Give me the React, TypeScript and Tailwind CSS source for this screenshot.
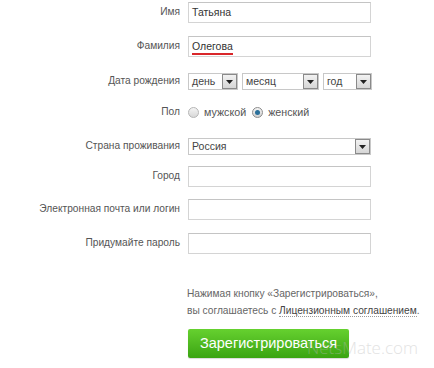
import React from "react";

const font = { fontFamily: '"Liberation Sans", Arial, sans-serif' };

function Arrow() {
  return (
    <div className="flex h-full w-[15px] items-center justify-center border border-[#8a8a8a] bg-gradient-to-b from-[#f2f2f2] to-[#d6d6d6]">
      <svg width="7" height="4" viewBox="0 0 7 4">
        <path d="M0 0 L7 0 L3.5 4 Z" fill="#222" />
      </svg>
    </div>
  );
}

function Select({ text, w }: { text: string; w: string }) {
  return (
    <div className={`flex h-[17px] items-center border border-[#c8c8c8] bg-white ${w}`}>
      <span className="flex-1 pl-[3px] text-[10.5px] leading-none text-[#444]">{text}</span>
      <Arrow />
    </div>
  );
}

function Row({ label, children, cls }: { label: string; children: React.ReactNode; cls: string }) {
  return (
    <div className={`grid grid-cols-[180px_183px] items-center gap-x-[8px] ${cls}`}>
      <div className="whitespace-nowrap text-right text-[10.2px] leading-none text-[#555]">{label}</div>
      <div className="flex items-center">{children}</div>
    </div>
  );
}

function Input({ value, underline }: { value?: string; underline?: boolean }) {
  return (
    <div className="relative flex h-[21px] w-[183px] items-center border border-[#d4d4d4] border-t-[#c4c4c4] bg-white pl-[3px] text-[10.5px] text-[#333]">
      {value && (
        <span className="relative leading-none">
          {value}
          {underline && <span className="absolute left-0 right-0 top-[12px] h-[2px] bg-[#d9262a]" />}
        </span>
      )}
    </div>
  );
}

export default function App() {
  return (
    <div className="relative h-[368px] w-[434px] overflow-hidden bg-white" style={font}>
      <div className="flex flex-col">
        <Row label="Имя" cls="mt-[2px] h-[21px]">
          <Input value="Татьяна" />
        </Row>
        <Row label="Фамилия" cls="mt-[13px] h-[21px]">
          <Input value="Олегова" underline />
        </Row>
        <Row label="Дата рождения" cls="mt-[16px] h-[17px]">
          <div className="flex gap-[4px]">
            <Select text="день" w="w-[50px]" />
            <Select text="месяц" w="w-[77px]" />
            <Select text="год" w="w-[49px]" />
          </div>
        </Row>
        <Row label="Пол" cls="mt-[14px] h-[16px]">
          <div className="flex items-center text-[10.7px] leading-none text-[#555]">
            <span className="mr-[5px] h-[11px] w-[11px] rounded-full border border-[#b5b5b5] bg-gradient-to-b from-[#f4f4f4] to-[#d8d8d8]" />
            <span className="mr-[6px]">мужской</span>
            <span className="mr-[5px] flex h-[11px] w-[11px] items-center justify-center rounded-full border border-[#8c8c8c] bg-gradient-to-b from-[#f4f4f4] to-[#d0d0d0]">
              <span className="h-[5px] w-[5px] rounded-full bg-[#2a6f9a]" />
            </span>
            <span>женский</span>
          </div>
        </Row>
        <Row label="Страна проживания" cls="mt-[18px] h-[16px]">
          <Select text="Россия" w="w-[183px] h-[16px]" />
        </Row>
        <Row label="Город" cls="mt-[12px] h-[21px]">
          <Input />
        </Row>
        <Row label="Электронная почта или логин" cls="mt-[12px] h-[21px]">
          <Input />
        </Row>
        <Row label="Придумайте пароль" cls="mt-[13px] h-[21px]">
          <Input />
        </Row>
        <div className="ml-[187px] mt-[31px] whitespace-nowrap text-[10.2px] leading-[17px] text-[#666]">
          <div>Нажимая кнопку «Зарегистрироваться»,</div>
          <div>
            вы соглашаетесь с{" "}
            <span className="border-b border-dotted border-[#999] text-[#444]">Лицензионным соглашением</span>.
          </div>
        </div>
        <div className="ml-[188px] mt-[10px] flex h-[29px] w-[161px] items-center justify-center rounded-[2px] bg-gradient-to-b from-[#66d12f] to-[#3aa411] text-[14.5px] text-white shadow-[0_1px_1px_rgba(0,0,0,0.15)]">
          Зарегистрироваться
        </div>
      </div>
      <div className="pointer-events-none absolute left-[307px] top-[339px] whitespace-nowrap text-[17px] leading-none text-[#b8b8b8] opacity-40" style={{ fontFamily: '"Open Sans", sans-serif', fontWeight: 300 }}>
        NetsMate.com
      </div>
    </div>
  );
}
